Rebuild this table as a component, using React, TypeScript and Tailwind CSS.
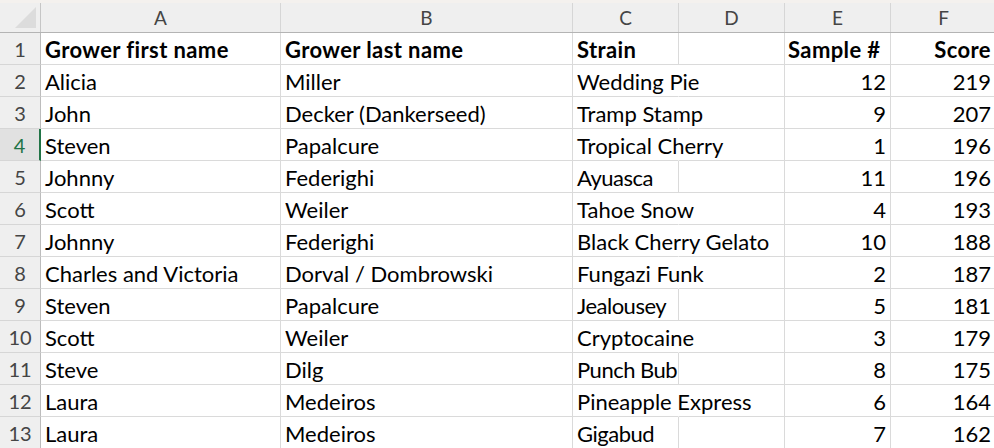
import clsx from "clsx";

type Row = {
  first: string;
  last: string;
  strain: string;
  spill: boolean;
  sample: string;
  score: string;
  bold?: boolean;
};

const rows: Row[] = [
  { first: "Grower first name", last: "Grower last name", strain: "Strain", spill: false, sample: "Sample #", score: "Score", bold: true },
  { first: "Alicia", last: "Miller", strain: "Wedding Pie", spill: true, sample: "12", score: "219" },
  { first: "John", last: "Decker (Dankerseed)", strain: "Tramp Stamp", spill: true, sample: "9", score: "207" },
  { first: "Steven", last: "Papalcure", strain: "Tropical Cherry", spill: true, sample: "1", score: "196" },
  { first: "Johnny", last: "Federighi", strain: "Ayuasca", spill: false, sample: "11", score: "196" },
  { first: "Scott", last: "Weiler", strain: "Tahoe Snow", spill: true, sample: "4", score: "193" },
  { first: "Johnny", last: "Federighi", strain: "Black Cherry Gelato", spill: true, sample: "10", score: "188" },
  { first: "Charles and Victoria", last: "Dorval / Dombrowski", strain: "Fungazi Funk", spill: true, sample: "2", score: "187" },
  { first: "Steven", last: "Papalcure", strain: "Jealousey", spill: false, sample: "5", score: "181" },
  { first: "Scott", last: "Weiler", strain: "Cryptocaine", spill: true, sample: "3", score: "179" },
  { first: "Steve", last: "Dilg", strain: "Punch Bub", spill: false, sample: "8", score: "175" },
  { first: "Laura", last: "Medeiros", strain: "Pineapple Express", spill: true, sample: "6", score: "164" },
  { first: "Laura", last: "Medeiros", strain: "Gigabud", spill: false, sample: "7", score: "162" },
];

const cols = ["A", "B", "C", "D", "E", "F"];
const grid = "grid grid-cols-[41px_240px_292px_106px_106px_106px_106px]";
const cell = "h-[32px] border-b border-r border-[#dadada] flex items-end whitespace-nowrap text-[22px] leading-[25px] pb-[2px] text-black";
const bold = "font-bold tracking-[0.4px]";

export default function App() {
  return (
    <div className="w-[994px] h-[448px] overflow-hidden bg-white font-[Lato,sans-serif]">
      <div className="h-[3px] bg-[#f4f1ee]" />
      <div className={clsx(grid, "h-[30px] bg-[#efefef] border-b border-[#b4b4b4]")}>
        <div className="relative border-r border-[#c6c6c6]">
          <svg width="41" height="29" className="absolute left-0 top-0">
            <polygon points="15,25 36,25 36,4" fill="#dcdcdc" />
          </svg>
        </div>
        {cols.map((c) => (
          <div
            key={c}
            className="flex items-end justify-center pb-[2px] border-r border-[#d6d6d6] text-[19px] leading-[24px] text-[#454545]"
          >
            {c}
          </div>
        ))}
      </div>
      {rows.map((r, i) => {
        const n = i + 1;
        const active = n === 4;
        return (
          <div key={n} className={grid}>
            <div
              className={clsx(
                "h-[32px] border-b border-[#d6d6d6] flex items-end justify-center pb-[2px] text-[20px] leading-[25px]",
                active
                  ? "bg-[#e1e1e1] text-[#217346] border-r-2 border-r-[#217346]"
                  : "bg-[#efefef] text-[#454545] border-r border-r-[#bcbcbc]"
              )}
            >
              {n}
            </div>
            <div className={clsx(cell, "px-[4px] overflow-hidden", r.bold && bold)}>{r.first}</div>
            <div className={clsx(cell, "px-[4px] overflow-hidden", r.bold && bold)}>{r.last}</div>
            <div
              className={clsx(
                cell,
                "px-[4px] relative z-10",
                r.spill
                  ? "overflow-visible border-r-transparent"
                  : r.bold
                    ? "overflow-hidden"
                    : "overflow-hidden tracking-[-0.5px]",
                r.bold && bold
              )}
            >
              {r.strain}
            </div>
            <div className={cell} />
            <div className={clsx(cell, r.bold ? clsx(bold, "px-[3px]") : "justify-end pr-[4px]")}>{r.sample}</div>
            <div className={clsx(cell, "justify-end pr-[5px]", r.bold && bold)}>{r.score}</div>
          </div>
        );
      })}
    </div>
  );
}
